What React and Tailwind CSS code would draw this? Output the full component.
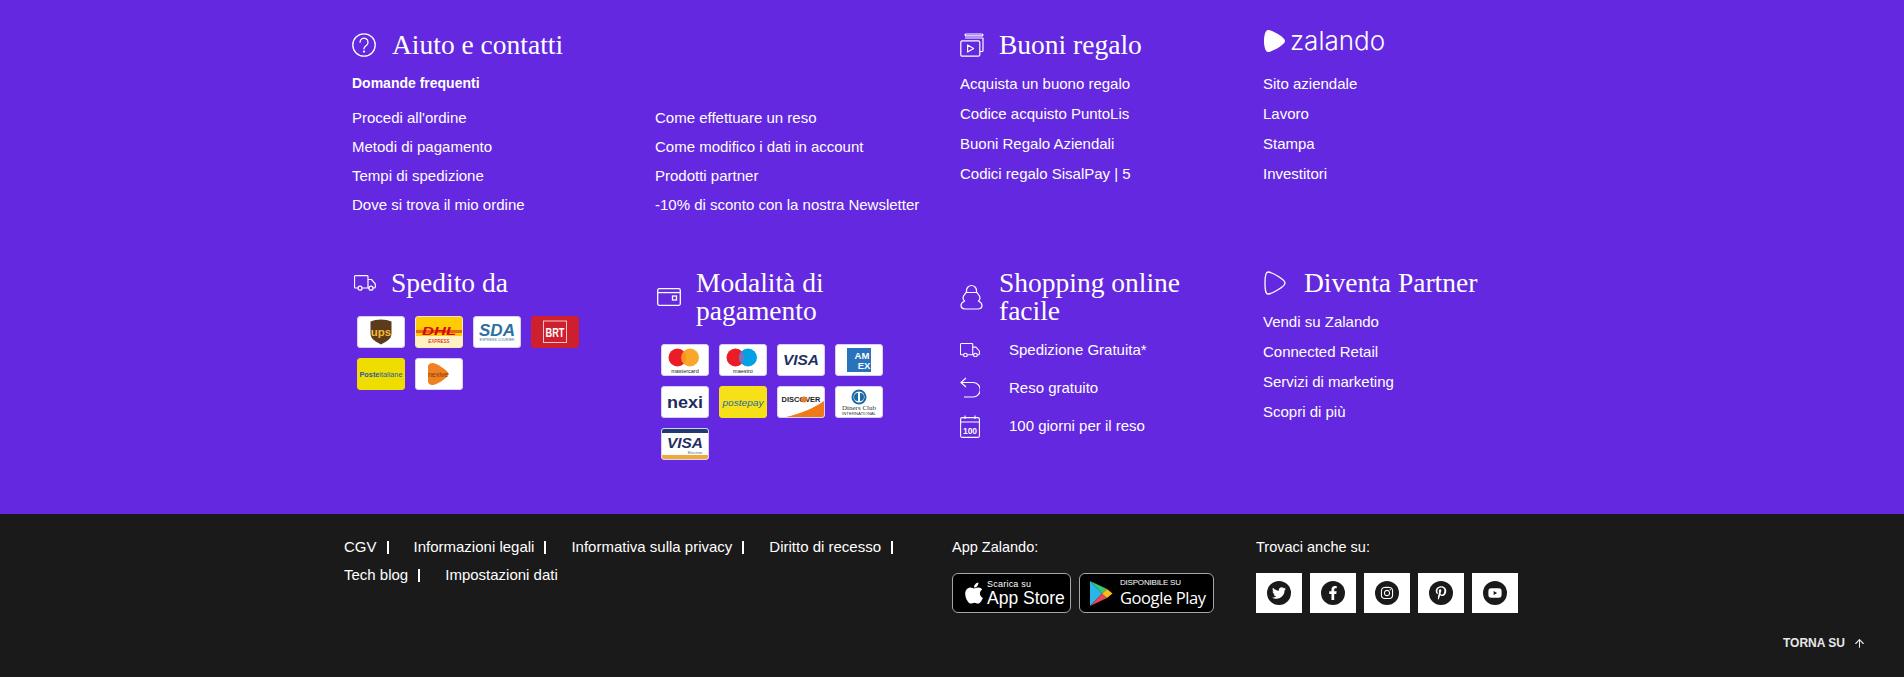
import { ArrowUp } from 'lucide-react'
import { FaApple, FaTwitter, FaFacebookF, FaInstagram, FaPinterestP, FaYoutube } from 'react-icons/fa'

const sans = "font-['Liberation_Sans',Arial,sans-serif]"

const HelpIcon = () => (
  <svg width="24" height="24" viewBox="0 0 24 24" fill="none" stroke="white" strokeWidth="1.3" strokeLinecap="round">
    <circle cx="12" cy="12" r="11.200" />
    <path d="M8 9.200a4 4 0 1 1 6.300 3.300c-1.300.9-2.300 1.700-2.300 3.300" />
    <circle cx="12" cy="18.600" r="0.500" fill="white" />
  </svg>
)

const TruckIcon = ({ w = 22 }) => (
  <svg width={w} viewBox="0 0 22 16" fill="none" stroke="white" strokeWidth="1.2" strokeLinejoin="round">
    <path d="M4 13H1.500a1 1 0 0 1-1-1V1.600a1 1 0 0 1 1-1H13a1 1 0 0 1 1 1V13H8" />
    <path d="M14 4.500h3.500l3.800 4.300V12a1 1 0 0 1-1 1H19M15 13h-1" />
    <circle cx="6" cy="13.200" r="2" />
    <circle cx="17" cy="13.200" r="2" />
  </svg>
)

const GiftIcon = () => (
  <svg width="24" height="24" viewBox="0 0 24 24" fill="none" stroke="white" strokeWidth="1.2" strokeLinejoin="round">
    <path d="M5 2.600V2a1 1 0 0 1 1-1h16a1 1 0 0 1 1 1v.6M5 2.800h18M5 5h18v12.500a1 1 0 0 1-1 1h-2" />
    <rect x="0.800" y="7.800" width="19" height="15.400" rx="1.500" />
    <path d="M7.600 12v7l6-3.500z" />
  </svg>
)

const WalletIcon = () => (
  <svg width="24" height="18" viewBox="0 0 24 18" fill="none" stroke="white" strokeWidth="1.3">
    <rect x="0.700" y="0.700" width="22.600" height="16.600" rx="1.500" />
    <path d="M1 4.600h22" />
    <rect x="15.500" y="8" width="4" height="4" />
  </svg>
)

const BagIcon = () => (
  <svg width="23" height="26" viewBox="0 0 23 26" fill="none" stroke="white" strokeWidth="1.2" strokeLinejoin="round">
    <path d="M6.500 9V6.500a5 5 0 0 1 10 0V9" />
    <path d="M6 8.500h11c1 2 3 3 3 5.500 0 1.500-1 2.400-1.600 3 1.600.8 3.600 2 3.600 4.300 0 2.400-2 3.700-4 3.700H5c-2 0-4-1.300-4-3.700 0-2.300 2-3.500 3.600-4.300C4 16.400 3 15.500 3 14c0-2.500 2-3.500 3-5.500z" />
  </svg>
)

const PlayOutline = () => (
  <svg width="22" height="24" viewBox="0 0 22 24" fill="none" stroke="white" strokeWidth="1.300">
    <path d="M4 1C8 1 21 8.500 21 12S8 23 4 23C1.500 23 1 18 1 12S1.500 1 4 1z" />
  </svg>
)

const ReturnIcon = () => (
  <svg width="20" height="22" viewBox="0 0 20 22" fill="none" stroke="white" strokeWidth="1.200">
    <path d="M6 1L1 5.500 6 10M1 5.500h12a6.500 6.500 0 0 1 0 14.500H4" />
  </svg>
)

const CalendarIcon = () => (
  <svg width="20" height="23" viewBox="0 0 20 23" fill="none" stroke="white" strokeWidth="1.100">
    <rect x="0.600" y="2.600" width="18.800" height="19.800" rx="1.500" />
    <path d="M0.600 7h18.800M5 .5v3.500M15 .5v3.500" />
    <text x="10" y="18.500" fill="white" stroke="none" fontSize="8.500" fontWeight="700" textAnchor="middle" fontFamily="Liberation Sans">100</text>
  </svg>
)

function Heading({ icon, children, gap = 'w-[41px]' }) {
  return (
    <div className="flex items-center">
      <div className={`${gap} shrink-0`}>{icon}</div>
      <h3 className="font-['Liberation_Serif',serif] text-[27.5px] leading-[28px] text-white whitespace-nowrap">{children}</h3>
    </div>
  )
}

function Card({ className = 'bg-white border-[#d8d0f3]', children }) {
  return (
    <div className={`w-[48px] h-[32px] rounded-[3px] border overflow-hidden flex items-center justify-center ${className}`}>
      {children}
    </div>
  )
}

const Logo = ({ children }) => (
  <svg width="46" height="30" viewBox="0 0 46 30" fontFamily="Liberation Sans">{children}</svg>
)

const shipping = [
  <Card key="ups">
    <Logo>
      <path d="M12.500 4.500c6-2.800 15-2.800 21 0v12c0 6-6 8.500-10.500 11-4.500-2.500-10.500-5-10.500-11z" fill="#5c3b1a" />
      <text x="23" y="19" fontSize="11.500" fontWeight="700" fill="#f6b93b" textAnchor="middle">ups</text>
    </Logo>
  </Card>,
  <Card key="dhl" className="bg-[#ffcb05] border-[#f4e9b0]">
    <Logo>
      <rect y="13" width="46" height="3" fill="#e8641b" />
      <rect y="19" width="46" height="11" fill="#fff3c4" />
      <text x="23" y="18" fontSize="11" fontWeight="700" fontStyle="italic" fill="#d40511" textAnchor="middle" textLength="34" lengthAdjust="spacingAndGlyphs">DHL</text>
      <text x="23" y="26" fontSize="4.500" fontStyle="italic" fill="#d40511" textAnchor="middle">EXPRESS</text>
    </Logo>
  </Card>,
  <Card key="sda">
    <Logo>
      <text x="23" y="19" fontSize="17" fontWeight="700" fontStyle="italic" fill="#2f6f9f" textAnchor="middle" textLength="36" lengthAdjust="spacingAndGlyphs">SDA</text>
      <text x="23" y="24" fontSize="4" fill="#2f6f9f" textAnchor="middle" textLength="35" lengthAdjust="spacingAndGlyphs">EXPRESS COURIER</text>
    </Logo>
  </Card>,
  <Card key="brt" className="bg-[#cd1f2e] border-[#cd1f2e]">
    <Logo>
      <rect x="11.500" y="4" width="23" height="21.500" fill="none" stroke="#f3c5ca" strokeWidth="1" />
      <text x="23" y="20" fontSize="13" fontWeight="700" fill="white" textAnchor="middle" textLength="19" lengthAdjust="spacingAndGlyphs">BRT</text>
    </Logo>
  </Card>,
  <Card key="poste" className="bg-[#f0dd00] border-[#f0dd00]">
    <Logo>
      <text x="23" y="18" fontSize="7.500" fill="#1f5aa8" textAnchor="middle" textLength="43" lengthAdjust="spacingAndGlyphs"><tspan fontWeight="700">Poste</tspan>italiane</text>
    </Logo>
  </Card>,
  <Card key="nexive">
    <Logo>
      <path d="M12 8c0-3 2-4 5-4 5 1 14 7 16 11-2 4-11 10-16 11-3 0-5-1-5-4z" fill="#f08122" />
      <text x="22" y="18" fontSize="7" fill="#7a3d0c" textAnchor="middle">nexive</text>
    </Logo>
  </Card>,
]

const payments = [
  <Card key="mc">
    <Logo>
      <circle cx="15.500" cy="12.500" r="9" fill="#eb1c26" />
      <circle cx="28" cy="12.500" r="9" fill="#f99f1b" fillOpacity="0.930" />
      <text x="23" y="27.500" fontSize="5.500" fill="#222" textAnchor="middle">mastercard</text>
    </Logo>
  </Card>,
  <Card key="maestro">
    <Logo>
      <circle cx="15.500" cy="12.500" r="9" fill="#eb1c26" />
      <circle cx="28" cy="12.500" r="9" fill="#00a2e5" />
      <path d="M21.700 6a9 9 0 0 1 0 13 9 9 0 0 1 0-13z" fill="#7673c0" />
      <text x="23" y="27.500" fontSize="5.500" fill="#222" textAnchor="middle">maestro</text>
    </Logo>
  </Card>,
  <Card key="visa">
    <Logo>
      <text x="23" y="20" fontSize="15" fontWeight="700" fontStyle="italic" fill="#1e2f66" textAnchor="middle" textLength="36" lengthAdjust="spacingAndGlyphs">VISA</text>
    </Logo>
  </Card>,
  <Card key="amex">
    <Logo>
      <rect x="11" y="3" width="24" height="24" fill="#2a73ba" />
      <text x="26" y="13.500" fontSize="9.500" fontWeight="700" fill="white" textAnchor="middle">AM</text>
      <text x="28" y="23.500" fontSize="9.500" fontWeight="700" fill="white" textAnchor="middle">EX</text>
    </Logo>
  </Card>,
  <Card key="nexi">
    <Logo>
      <text x="23" y="21" fontSize="16" fontWeight="700" fill="#1f2c5c" textAnchor="middle" textLength="36" lengthAdjust="spacingAndGlyphs">nexi</text>
    </Logo>
  </Card>,
  <Card key="postepay" className="bg-[#f7e017] border-[#f7e017]">
    <Logo>
      <text x="23" y="19" fontSize="9.500" fontStyle="italic" fill="#1d6aa5" textAnchor="middle" textLength="41" lengthAdjust="spacingAndGlyphs">postepay</text>
    </Logo>
  </Card>,
  <Card key="discover">
    <Logo>
      <path d="M8 30C22 27 38 20 46 14v16z" fill="#f07a1a" />
      <text x="23" y="15" fontSize="7.500" fontWeight="700" fill="#222" textAnchor="middle" textLength="39" lengthAdjust="spacingAndGlyphs">DISCOVER</text>
      <circle cx="26" cy="12.500" r="3" fill="#f07a1a" />
    </Logo>
  </Card>,
  <Card key="diners">
    <Logo>
      <circle cx="23" cy="10" r="7.500" fill="#1a6aa8" />
      <circle cx="23" cy="10" r="5.500" fill="white" />
      <path d="M22 6v8a4 4 0 0 1 0-8zM24 6v8a4 4 0 0 0 0-8z" fill="#1a6aa8" />
      <text x="23" y="23" fontSize="6.500" fontFamily="Liberation Serif" fill="#333" textAnchor="middle" textLength="34" lengthAdjust="spacingAndGlyphs">Diners Club</text>
      <text x="23" y="27.500" fontSize="3.500" fill="#333" textAnchor="middle" textLength="34" lengthAdjust="spacingAndGlyphs">INTERNATIONAL</text>
    </Logo>
  </Card>,
  <Card key="electron">
    <Logo>
      <rect width="46" height="4" fill="#1e3a6e" />
      <rect y="26" width="46" height="4" fill="#f2a93b" />
      <text x="23" y="19" fontSize="15" fontWeight="700" fontStyle="italic" fill="#1e2f66" textAnchor="middle" textLength="36" lengthAdjust="spacingAndGlyphs">VISA</text>
      <text x="33" y="25" fontSize="4" fill="#667" textAnchor="middle">Electron</text>
    </Logo>
  </Card>,
]

const faqLeft = ["Procedi all'ordine", 'Metodi di pagamento', 'Tempi di spedizione', 'Dove si trova il mio ordine']
const faqRight = ['Come effettuare un reso', 'Come modifico i dati in account', 'Prodotti partner', '-10% di sconto con la nostra Newsletter']
const gifts = ['Acquista un buono regalo', 'Codice acquisto PuntoLis', 'Buoni Regalo Aziendali', 'Codici regalo SisalPay | 5']
const company = ['Sito aziendale', 'Lavoro', 'Stampa', 'Investitori']
const partner = ['Vendi su Zalando', 'Connected Retail', 'Servizi di marketing', 'Scopri di più']
const legalOne = ['CGV', 'Informazioni legali', 'Informativa sulla privacy', 'Diritto di recesso']
const legalTwo = ['Tech blog', 'Impostazioni dati']
const perks = [
  { label: 'Spedizione Gratuita*', icon: <TruckIcon w={20} /> },
  { label: 'Reso gratuito', icon: <ReturnIcon /> },
  { label: '100 giorni per il reso', icon: <CalendarIcon /> },
]
const socials = [FaTwitter, FaFacebookF, FaInstagram, FaPinterestP, FaYoutube]

function LinkList({ items, className = '' }) {
  return (
    <ul className={`flex flex-col gap-[10px] ${className}`}>
      {items.map((t) => (
        <li key={t} className="text-[15px] leading-[20px] text-white whitespace-nowrap">{t}</li>
      ))}
    </ul>
  )
}

function LegalRow({ items, lastSep = true }) {
  return (
    <div className="flex h-[28px] items-center text-[15px]">
      {items.map((t, i) => (
        <span key={t} className="flex items-center mr-[25px]">
          <span>{t}</span>
          {(lastSep || i < items.length - 1) && <span className="ml-[10px] w-[2px] h-[13px] bg-white" />}
        </span>
      ))}
    </div>
  )
}

export default function App() {
  return (
    <div className={`${sans} w-full min-h-[677px] bg-[#1a1a1a]`}>
      <section className="bg-[#6328e0] h-[514px] pl-[351px] pt-[31px]">
        {/* top row */}
        <div className="grid grid-cols-[304px_304px_304px_304px] h-[238px]">
          <div className="col-span-2 pl-px">
            <Heading gap="w-[40px]" icon={<HelpIcon />}>Aiuto e contatti</Heading>
            <p className="mt-[14px] text-sm leading-[20px] font-bold text-white">Domande frequenti</p>
            <div className="mt-[15px] grid grid-cols-[303px_304px]">
              <LinkList items={faqLeft} className="!gap-[9px]" />
              <LinkList items={faqRight} className="!gap-[9px]" />
            </div>
          </div>
          <div className="pl-px">
            <Heading gap="w-[39px]" icon={<GiftIcon />}>Buoni regalo</Heading>
            <LinkList items={gifts} className="mt-[15px]" />
          </div>
          <div>
            <div className="flex items-center h-[28px] -mt-[4px] ml-px">
              <svg width="21" height="24" viewBox="0 0 21 24" fill="white">
                <path d="M4 1C8 1 21 8.500 21 12S8 23 4 23C1.500 23 0 18 0 12S1.500 1 4 1z" />
              </svg>
              <span className="ml-[5px] font-['Inter',sans-serif] font-light text-[26px] leading-[28px] text-white">zalando</span>
            </div>
            <LinkList items={company} className="mt-[19px]" />
          </div>
        </div>

        {/* bottom row */}
        <div className="grid grid-cols-[304px_304px_304px_304px]">
          <div>
            <div className="pl-[3px]">
              <Heading gap="w-[37px]" icon={<TruckIcon />}>Spedito da</Heading>
            </div>
            <div className="mt-[19px] pl-[6px] flex flex-wrap gap-[10px] w-[240px]">{shipping}</div>
          </div>
          <div>
            <div className="pl-[2px]">
              <Heading gap="w-[39px]" icon={<WalletIcon />}>Modalità di<br />pagamento</Heading>
            </div>
            <div className="mt-[19px] pl-[6px] flex flex-wrap gap-[10px] w-[240px]">{payments}</div>
          </div>
          <div className="pl-px">
            <Heading gap="w-[39px]" icon={<BagIcon />}>Shopping online<br />facile</Heading>
            <ul className="mt-[15px] flex flex-col gap-[18px]">
              {perks.map((p) => (
                <li key={p.label} className="flex items-center h-[20px] text-[15px] text-white">
                  <span className="w-[49px] shrink-0 flex">{p.icon}</span>
                  {p.label}
                </li>
              ))}
            </ul>
          </div>
          <div className="pl-px">
            <Heading gap="w-[40px]" icon={<PlayOutline />}>Diventa Partner</Heading>
            <LinkList items={partner} className="mt-[15px] -ml-px" />
          </div>
        </div>
      </section>

      <footer className="relative h-[163px] pl-[344px] pt-[19px] text-[14.5px] text-white flex">
        <div className="w-[608px]">
          <LegalRow items={legalOne} />
          <LegalRow items={legalTwo} lastSep={false} />
        </div>
        <div className="w-[304px]">
          <p className="h-[28px] leading-[28px]">App Zalando:</p>
          <div className="mt-[12px] flex gap-[8px]">
            <div className="w-[119px] h-[40px] bg-black border border-[#a6a6a6] rounded-[6px] flex items-center pl-[9px]">
              <FaApple size={24} color="white" />
              <div className="ml-px flex flex-col whitespace-nowrap">
                <span className="text-[9px] leading-[10px] tracking-wide">Scarica su</span>
                <span className="text-[17.5px] leading-[19px]">App Store</span>
              </div>
            </div>
            <div className="w-[135px] h-[40px] bg-black border border-[#a6a6a6] rounded-[6px] flex items-center pl-[9px]">
              <svg width="24" height="27" viewBox="0 0 24 27">
                <path d="M1 1v25l12-12.500z" fill="#29b6e8" />
                <path d="M1 1l12 12.500 5-4.500z" fill="#35c87a" />
                <path d="M1 26l12-12.500 5 4.500z" fill="#ea4552" />
                <path d="M18 9l5.500 4.500L18 18l-5-4.500z" fill="#fbbc1a" />
              </svg>
              <div className="ml-[7px] flex flex-col whitespace-nowrap">
                <span className="text-[8px] leading-[10px] tracking-tight">DISPONIBILE SU</span>
                <span className="font-['Open_Sans',sans-serif] text-[16.5px] leading-[20px] tracking-tight">Google Play</span>
              </div>
            </div>
          </div>
        </div>
        <div>
          <p className="h-[28px] leading-[28px]">Trovaci anche su:</p>
          <div className="mt-[12px] flex gap-[8px]">
            {socials.map((Icon, i) => (
              <div key={i} className="w-[46px] h-[40px] bg-white flex items-center justify-center">
                <div className="w-[24px] h-[24px] rounded-full bg-[#1a1a1a] flex items-center justify-center">
                  <Icon size={14} color="white" />
                </div>
              </div>
            ))}
          </div>
        </div>
        <div className="absolute left-[1783px] top-[122px] flex items-center gap-[8px] text-[12px] leading-[14px] font-bold text-[#e8e8e8]">
          TORNA SU
          <ArrowUp size={13} strokeWidth={2} />
        </div>
      </footer>
    </div>
  )
}
